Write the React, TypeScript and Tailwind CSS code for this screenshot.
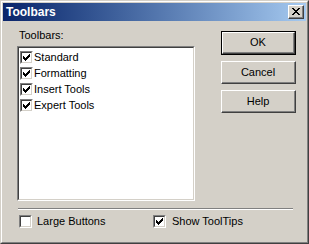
import React from "react";

const Check = ({ checked }: { checked: boolean }) => (
  <div className="w-[13px] h-[13px] bg-white border-t border-l border-t-[#808080] border-l-[#808080] border-b border-r border-b-white border-r-white shrink-0">
    <div className="w-full h-full border-t border-l border-t-[#404040] border-l-[#404040] border-b border-r border-b-[#d4d0c8] border-r-[#d4d0c8] flex items-center justify-center">
      {checked && (
        <svg width="7" height="7" viewBox="0 0 7 7">
          <path d="M0 2h1v3H0z M1 3h1v3H1z M2 4h1v3H2z M3 3h1v3H3z M4 2h1v3H4z M5 1h1v3H5z M6 0h1v3H6z" fill="#000" />
        </svg>
      )}
    </div>
  </div>
);

const Btn = ({ label, def }: { label: string; def?: boolean }) => (
  <div className={`w-[75px] ${def ? "h-[24px] border border-black" : "h-[23px]"}`}>
    <div className="w-full h-full border-t border-l border-t-white border-l-white border-b border-r border-b-[#404040] border-r-[#404040]">
      <div className="w-full h-full border-b border-r border-b-[#808080] border-r-[#808080] flex items-center justify-center text-[11px] text-black">
        {label}
      </div>
    </div>
  </div>
);

export default function App() {
  const items = ["Standard", "Formatting", "Insert Tools", "Expert Tools"];
  return (
    <div
      className="w-[309px] h-[244px] bg-[#d4d0c8] border-t border-l border-t-[#d4d0c8] border-l-[#d4d0c8] border-b border-r border-b-[#404040] border-r-[#404040]"
      style={{ fontFamily: '"Liberation Sans", Arial, sans-serif' }}
    >
      <div className="w-full h-full border-t border-l border-t-white border-l-white border-b border-r border-b-[#808080] border-r-[#808080] p-px flex flex-col">
        <div className="h-[18px] bg-gradient-to-r from-[#0a246a] to-[#a6caf0] flex items-center pl-[3px] pr-[2px]">
          <span className="text-white font-bold text-[12px] leading-none">Toolbars</span>
          <div className="ml-auto w-[16px] h-[14px] bg-[#d4d0c8] border-t border-l border-t-white border-l-white border-b border-r border-b-[#404040] border-r-[#404040]">
            <div className="w-full h-full border-b border-r border-b-[#808080] border-r-[#808080] flex items-center justify-center">
              <svg width="8" height="7" viewBox="0 0 8 7">
                <path d="M0 0h2v1h-2z M6 0h2v1h-2z M1 1h2v1h-2z M5 1h2v1h-2z M2 2h4v1h-4z M3 3h2v1h-2z M2 4h4v1h-4z M1 5h2v1h-2z M5 5h2v1h-2z M0 6h2v1h-2z M6 6h2v1h-2z" fill="#000" />
              </svg>
            </div>
          </div>
        </div>
        <div className="flex-1 flex flex-col px-[14px]">
          <div className="flex">
            <div className="flex flex-col">
              <div className="text-[11px] text-black mt-[8px] ml-[2px] leading-[13px]">Toolbars:</div>
              <div className="mt-[4px] w-[178px] h-[155px] border-t border-l border-t-[#808080] border-l-[#808080] border-b border-r border-b-white border-r-white">
                <div className="w-full h-full bg-white border-t border-l border-t-[#404040] border-l-[#404040] border-b border-r border-b-[#d4d0c8] border-r-[#d4d0c8] pt-[1px] pl-[1px] flex flex-col">
                  {items.map((t) => (
                    <div key={t} className="h-[16px] flex items-center gap-[1px]">
                      <Check checked />
                      <span className="text-[11px] text-black leading-none">{t}</span>
                    </div>
                  ))}
                </div>
              </div>
            </div>
            <div className="ml-auto mr-[-4px] mt-[10px] flex flex-col gap-[6px]">
              <Btn label="OK" def />
              <Btn label="Cancel" />
              <Btn label="Help" />
            </div>
          </div>
          <div className="mt-[7px] ml-[1px] mr-[-1px] border-t border-t-[#808080] border-b border-b-white" />
          <div className="flex items-center mt-[3px] ml-[2px]">
            <div className="w-[134px] flex items-center">
              <Check checked={false} />
              <span className="text-[11px] text-black ml-[5px]">Large Buttons</span>
            </div>
            <div className="flex items-center">
              <Check checked />
              <span className="text-[11px] text-black ml-[6px]">Show ToolTips</span>
            </div>
          </div>
        </div>
      </div>
    </div>
  );
}
